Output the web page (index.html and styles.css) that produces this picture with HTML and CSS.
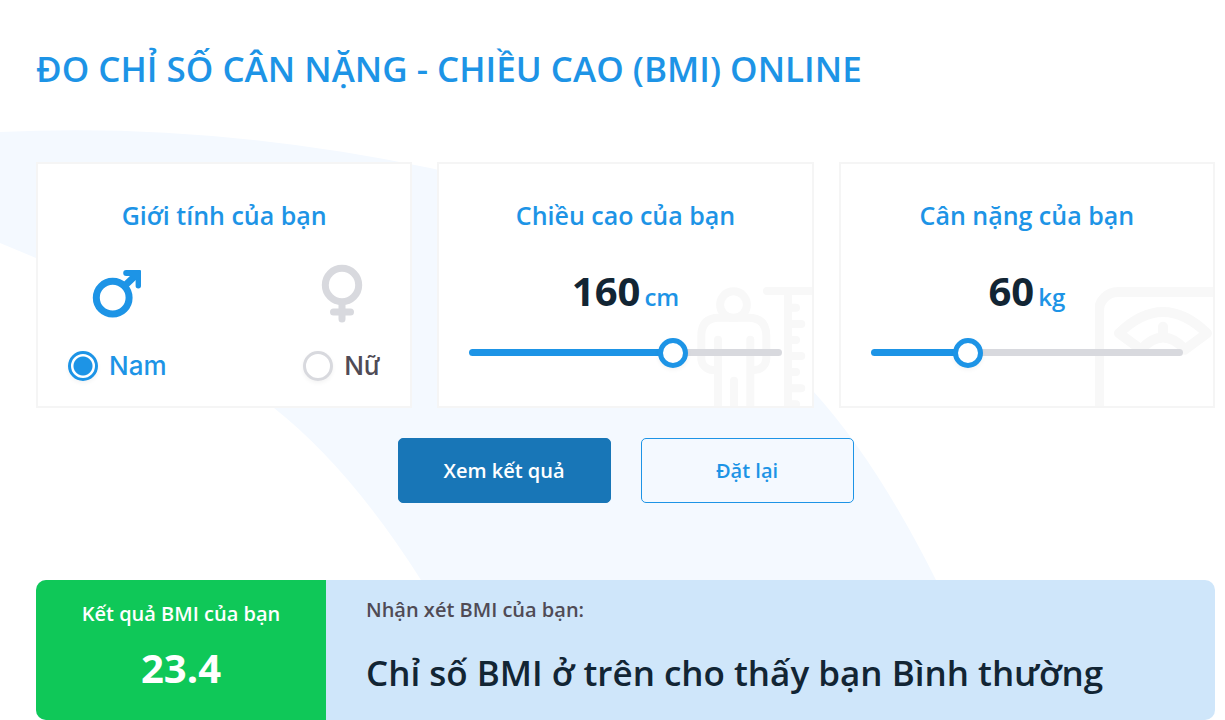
FILE: index.html
```html
<!DOCTYPE html>
<html lang="vi">
<head>
<meta charset="utf-8">
<meta name="viewport" content="width=device-width, initial-scale=1">
<title>Đo chỉ số BMI online</title>
<link rel="stylesheet" href="styles.css">
</head>
<body>
<svg class="backdrop" viewBox="0 0 1225 720" preserveAspectRatio="none" aria-hidden="true">
  <path d="M0 132Q210 122 430 168C560 196 700 262 813 391Q876 460 936 580Q970 640 1000 720H480Q460 640 421 580Q350 468 274 408Q170 310 36 258L0 243Z"/>
</svg>
<main class="page">
  <h1 class="title">ĐO CHỈ SỐ CÂN NẶNG - CHIỀU CAO (BMI) ONLINE</h1>
  <form class="form">
    <div class="cards">
      <fieldset class="card">
        <legend class="card-title">Giới tính của bạn</legend>
        <div class="genders">
          <label class="gender">
            <svg class="gender-icon male" viewBox="0 0 60 60" aria-hidden="true">
              <circle cx="25.700" cy="33.700" r="16.400"/>
              <path d="M38 21.500L48 12"/>
              <path class="head" d="M39.200 6H53Q54 6 54 7V21.700A2.700 2.700 0 0 1 48.600 21.700V16L44 12H39.200A3 3 0 0 1 39.200 6Z"/>
            </svg>
            <span class="choice"><input class="radio" type="radio" name="gender" checked><span>Nam</span></span>
          </label>
          <label class="gender">
            <svg class="gender-icon female" viewBox="0 0 60 60" aria-hidden="true">
              <circle cx="30" cy="21" r="16.700"/>
              <path d="M30 39V55M21.500 48H38.500"/>
            </svg>
            <span class="choice"><input class="radio" type="radio" name="gender"><span>Nữ</span></span>
          </label>
        </div>
      </fieldset>
      <section class="card">
        <svg class="art" viewBox="0 0 118 120" aria-hidden="true">
          <g class="thin">
            <circle cx="39.500" cy="18.700" r="13.400"/>
            <path d="M24 124V53.700M24 84H19A11.700 11.700 0 0 1 7.300 73V50Q7.300 31.700 25 31.700H54.500Q72.300 31.700 72.300 50V73A11.700 11.700 0 0 1 60.600 84H56.300M56.300 124V53.700M40 124V94.700"/>
            <path d="M73 5H122M94 5V124M94 21.700H102M94 38H107.300M94 54H102M94 70H107.300M94 86H102M94 102.300H107.300M94 118.300H102"/>
          </g>
        </svg>
        <h2 class="card-title"><label for="height">Chiều cao của bạn</label></h2>
        <p class="reading"><strong>160</strong><span>cm</span></p>
        <input class="slider height" id="height" type="range" min="0" max="240" value="160">
      </section>
      <section class="card">
        <svg class="art" viewBox="0 0 118 120" aria-hidden="true">
          <g class="thick">
            <path d="M4 126V25A19 19 0 0 1 23 6H124"/>
            <path d="M46 63.500L24 47.300Q68 4.700 112 47.300L90 63.500Q68 39.500 46 63.500M68 40.700V50"/>
          </g>
        </svg>
        <h2 class="card-title"><label for="weight">Cân nặng của bạn</label></h2>
        <p class="reading"><strong>60</strong><span>kg</span></p>
        <input class="slider weight" id="weight" type="range" min="2" max="200" value="60">
      </section>
    </div>
    <div class="actions">
      <button class="button primary" type="button">Xem kết quả</button>
      <button class="button" type="reset">Đặt lại</button>
    </div>
  </form>
  <section class="result">
    <div class="score">
      <h2 class="score-title">Kết quả BMI của bạn</h2>
      <strong class="score-value">23.4</strong>
    </div>
    <div class="comment">
      <p class="comment-title">Nhận xét BMI của bạn:</p>
      <p class="comment-text">Chỉ số BMI ở trên cho thấy bạn Bình thường</p>
    </div>
  </section>
</main>
</body>
</html>
```
FILE: styles.css
```css
* { box-sizing: border-box; }
body {
  margin: 0;
  background: #fff;
  color: #122534;
  font-family: "Open Sans", "Noto Sans", sans-serif;
  font-weight: 600;
}
h1, h2, p, fieldset { margin: 0; }
.backdrop {
  position: absolute;
  z-index: -1;
  top: 0;
  left: 0;
  width: 100%;
  height: 720px;
  fill: #f4f9ff;
}
.page { padding: 44px 10px 0 36px; }
.title {
  font-size: 35px;
  line-height: 50px;
  font-weight: 600;
  color: #1d94e6;
}
.cards {
  display: grid;
  grid-template-columns: repeat(3, minmax(0, 1fr));
  gap: 25px;
  margin-top: 68px;
}
.card {
  position: relative;
  min-width: 0;
  min-height: 246px;
  padding: 34px 30px 20px;
  border: 2px solid #f5f5f5;
  background: #fff;
}
.card-title {
  float: left;
  width: 100%;
  padding: 0;
  font-size: 25px;
  line-height: 34px;
  font-weight: 600;
  text-align: center;
  color: #1d94e6;
}
.genders {
  clear: both;
  display: flex;
  justify-content: space-between;
  padding-top: 32px;
}
.gender { display: grid; gap: 25px; justify-items: center; }
.gender-icon {
  width: 60px;
  height: 60px;
  fill: none;
  stroke: currentColor;
  stroke-width: 7;
  stroke-linecap: round;
}
.male { color: #1d94e6; }
.male .head { fill: currentColor; stroke: none; }
.female { color: #d8d9de; }
.choice {
  display: flex;
  align-items: center;
  gap: 11px;
  font-family: Inter, "Open Sans", sans-serif;
  font-size: 26px;
  line-height: 34px;
  font-weight: 500;
  color: #504b55;
}
.choice:has(:checked) { color: #1d94e6; }
.radio {
  appearance: none;
  width: 30px;
  height: 30px;
  margin: 0;
  border: 3px solid #d8d9de;
  border-radius: 50%;
  background: #fff;
  box-shadow: 0 2px 4px rgba(0, 0, 0, .05);
}
.radio:checked {
  border-color: #1d94e6;
  background: radial-gradient(circle, #1d94e6 9px, #fff 10px);
}
.art {
  position: absolute;
  right: 0;
  bottom: 0;
  width: 118px;
  height: 120px;
  fill: none;
  stroke: #f8f8f8;
  stroke-linecap: round;
  stroke-linejoin: round;
}
.thin { stroke-width: 8; }
.thick { stroke-width: 10; }
.reading {
  clear: both;
  position: relative;
  display: flex;
  justify-content: center;
  align-items: baseline;
  gap: 4px;
  padding-top: 31px;
  line-height: 56px;
}
.reading strong { font-size: 40px; font-weight: 700; }
.reading span { font-size: 24px; color: #1d94e6; }
.slider {
  position: relative;
  display: block;
  appearance: none;
  width: 100%;
  height: 30px;
  margin: 12px 0 0;
  background: none;
}
.slider::-webkit-slider-runnable-track {
  height: 7px;
  border-radius: 4px;
  background: linear-gradient(to right, #1d94e6 var(--filled), #d8d9de var(--filled));
}
.slider::-webkit-slider-thumb {
  appearance: none;
  width: 30px;
  height: 30px;
  margin-top: -11px;
  border: 5px solid #1d94e6;
  border-radius: 50%;
  background: #fff;
  box-shadow: 0 2px 4px rgba(0, 0, 0, .05);
}
.height { --filled: 66%; }
.weight { --filled: 32%; }
.actions {
  display: flex;
  justify-content: center;
  gap: 30px;
  margin-top: 30px;
}
.button {
  width: 213px;
  height: 65px;
  border: 1px solid #1d94e6;
  border-radius: 5px;
  background: transparent;
  color: #1d94e6;
  font: 600 20px "Open Sans", "Noto Sans", sans-serif;
}
.primary { border-color: #1876b7; background: #1876b7; color: #fff; }
.result {
  display: flex;
  min-height: 140px;
  margin-top: 77px;
  overflow: hidden;
  border-radius: 10px;
  background: #cfe6fa;
}
.score {
  flex: 0 0 290px;
  padding: 20px;
  background: #0fc858;
  color: #fff;
  text-align: center;
}
.score-title { font-size: 20px; line-height: 28px; font-weight: 600; }
.score-value { display: block; margin-top: 12px; font-size: 40px; line-height: 56px; font-weight: 700; }
.comment { padding: 16px 40px; }
.comment-title { font-size: 20px; line-height: 28px; color: #504b55; }
.comment-text { margin-top: 24px; font-size: 35px; line-height: 50px; }
```
